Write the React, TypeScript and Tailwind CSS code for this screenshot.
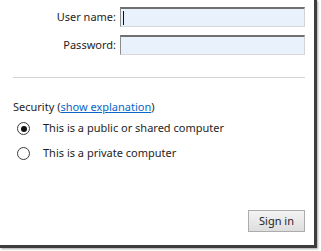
import React from 'react';

const font = { fontFamily: '"Noto Sans", "Open Sans", sans-serif' };

const Field: React.FC<{ label: string; caret?: boolean }> = ({ label, caret }) => (
  <div className="flex items-center h-[20px]">
    <div className="w-[120px] pr-[4px] text-right text-[11px] text-[#1e1e1e]">{label}</div>
    <div className="flex items-center w-[185px] h-[20px] bg-[#e9f2fc] border-t-2 border-t-[#6f6f6f] border-l border-l-[#8c8c8c] border-r border-r-[#d3d3d3] border-b border-b-[#d8d8d8] pl-[2px]">
      {caret && <span className="block w-[1px] h-[14px] bg-[#111]" />}
    </div>
  </div>
);

const Radio: React.FC<{ label: string; checked?: boolean }> = ({ label, checked }) => (
  <div className="flex items-center h-[25px] pl-[4px]">
    <span className="flex items-center justify-center w-[13px] h-[13px] rounded-full border border-[#3c3c3c] bg-white">
      {checked && <span className="block w-[6px] h-[6px] rounded-full bg-[#111]" />}
    </span>
    <span className="ml-[13px] text-[11px] text-[#1e1e1e]">{label}</span>
  </div>
);

export default function App() {
  return (
    <div className="w-[321px] h-[251px] bg-white" style={font}>
      <div className="flex flex-col w-[317px] h-[248px] pl-[13px] pr-[9px] pt-[7px] pb-[13px] border-r-[3px] border-b-[3px] border-[#3d3d3d] shadow-[1px_1px_2px_rgba(0,0,0,0.35)]">
        <div className="flex flex-col gap-[8px] -ml-[13px]">
          <Field label="User name:" caret />
          <Field label="Password:" />
        </div>

        <div className="mt-[22px] h-px bg-[#d4d4d4]" />

        <div className="mt-[21px] h-[16px] leading-[16px] text-[11px] text-[#1e1e1e]">
          Security (<a className="text-[#0a66c8] underline">show explanation</a>)
        </div>

        <div className="mt-[1px] flex flex-col">
          <Radio label="This is a public or shared computer" checked />
          <Radio label="This is a private computer" />
        </div>

        <div className="flex-1" />

        <div className="flex justify-end">
          <button className="w-[57px] h-[22px] text-[11px] text-[#1e1e1e] border border-[#acacac] bg-gradient-to-b from-[#f4f4f4] to-[#dedede]">
            Sign in
          </button>
        </div>
      </div>
    </div>
  );
}
